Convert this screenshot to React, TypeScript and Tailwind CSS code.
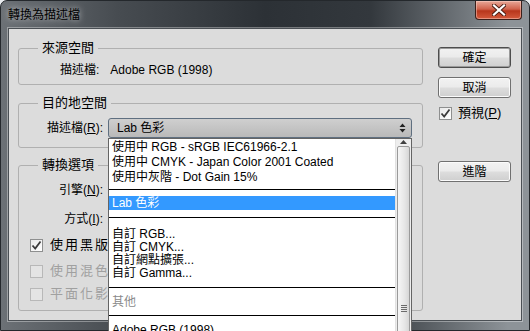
import React from 'react';

// Windows 7 styled "轉換為描述檔" dialog with the destination profile list opened

const font = "font-['Liberation_Sans','Noto_Sans_CJK_TC',sans-serif]";

const Check = ({ checked, disabled }: { checked?: boolean; disabled?: boolean }) => (
    <span
        className={`flex h-[13px] w-[13px] shrink-0 items-center justify-center border ${
            disabled ? 'border-[#b8b8b8] bg-[#e4e4e4]' : 'border-[#8e8f8f] bg-[linear-gradient(135deg,#e8e8e8,#ffffff)]'
        }`}
    >
        {checked && (
            <svg width="11" height="11" viewBox="0 0 11 11">
                <path d="M1.5 5.5 L4.2 8.5 L9.5 1.5" fill="none" stroke="#3a3a3a" strokeWidth="1.8" />
            </svg>
        )}
    </span>
);

const Button = ({ label, isDefault }: { label: string; isDefault?: boolean }) => (
    <button
        className={`flex h-[21px] w-[73px] items-center justify-center rounded-[3px] border text-[12px] leading-none text-black bg-[linear-gradient(#f2f2f2_0%,#ebebeb_48%,#dddddd_52%,#cfcfcf_100%)] ${
            isDefault ? 'border-[#4d4d4d] shadow-[inset_0_0_0_1px_#9a9a9a]' : 'border-[#707070] shadow-[inset_0_0_0_1px_#fbfbfb]'
        }`}
    >
        {label}
    </button>
);

const Separator = ({ h, top }: { h: string; top: string }) => (
    <div className={`${h} ${top}`}>
        <div className="h-px bg-black" />
    </div>
);

const Item = ({ text, h, muted }: { text: string; h: string; muted?: boolean }) => (
    <div className={`${h} flex items-center pl-[3px] whitespace-nowrap ${muted ? 'text-[#8a8a8a]' : 'text-black'}`}>
        {text}
    </div>
);

const App = () => {
    return (
        <div className={`h-[331px] w-[530px] overflow-hidden bg-[#e9ecef] ${font}`}>
            <div className="relative flex h-full w-full flex-col rounded-t-[7px] border border-[#24282c] bg-[linear-gradient(90deg,#6c7176_0%,#474c51_22%,#2c3136_50%,#33383d_70%,#8d9398_96%)]">
                {/* Title bar */}
                <div className="flex h-[27px] shrink-0 justify-between">
                    <span className="self-center pl-[7px] text-[12px] leading-none text-black [text-shadow:0_0_6px_rgba(255,255,255,0.7)]">
                        轉換為描述檔
                    </span>
                    <div className="mr-[7px] flex h-[19px] w-[47px] items-center justify-center rounded-b-[4px] border border-t-0 border-[#3b1f1a] bg-[linear-gradient(#e8a898_0%,#d0634c_45%,#b8361c_55%,#d45a3c_100%)] shadow-[inset_0_0_0_1px_rgba(255,220,210,0.45)]">
                        <svg width="14" height="12" viewBox="0 0 14 12">
                            <path d="M2 1.5 L12 10.5 M12 1.5 L2 10.5" stroke="#4a1c12" strokeWidth="4" strokeLinecap="square" />
                            <path d="M2 1.5 L12 10.5 M12 1.5 L2 10.5" stroke="#ffffff" strokeWidth="2.2" strokeLinecap="square" />
                        </svg>
                    </div>
                </div>

                {/* Client area */}
                <div className="mx-[7px] mb-[9px] flex flex-1 border border-[#4a4f54] bg-[#dcdcdc] text-[12px] text-black shadow-[0_0_0_1px_rgba(255,255,255,0.35)]">
                    <div className="w-[414px] shrink-0 pl-[9px] pt-[10px]">
                        {/* 來源空間 */}
                        <fieldset className="h-[46px] w-[405px] rounded-[3px] border border-[#b0b0b0]">
                            <legend className="ml-[19px] px-[4px] text-[13px] leading-[18px]">來源空間</legend>
                            <div className="mt-[5px] flex h-[16px] items-center pl-[41px]">
                                <span>描述檔:</span>
                                <span className="ml-[11px]">Adobe RGB (1998)</span>
                            </div>
                        </fieldset>

                        {/* 目的地空間 */}
                        <fieldset className="mt-[9px] h-[54px] w-[405px] rounded-[3px] border border-[#b0b0b0]">
                            <legend className="ml-[19px] px-[4px] text-[13px] leading-[18px]">目的地空間</legend>
                            <div className="mt-[6px] flex items-center pl-[23px]">
                                <span className="w-[61px] text-right">
                                    描述檔(<u>R</u>):
                                </span>
                                <div className="ml-[5px] flex h-[20px] w-[304px] items-center justify-between rounded-[3px] border border-[#5f6f80] bg-[linear-gradient(#cfcfcf,#b9b9b9)] pl-[8px] pr-[5px]">
                                    <span>Lab 色彩</span>
                                    <svg width="7" height="10" viewBox="0 0 7 10">
                                        <path d="M3.5 0.5 L6.5 4 L0.5 4 Z M3.5 9.5 L6.5 6 L0.5 6 Z" fill="#202020" />
                                    </svg>
                                </div>
                            </div>
                        </fieldset>

                        {/* 轉換選項 */}
                        <fieldset className="mt-[8px] h-[155px] w-[405px] rounded-[3px] border border-[#b0b0b0]">
                            <legend className="ml-[19px] px-[4px] text-[13px] leading-[18px]">轉換選項</legend>
                            <div className="mt-[6px] flex h-[20px] items-center pl-[23px]">
                                <span className="w-[61px] text-right">
                                    引擎(<u>N</u>):
                                </span>
                            </div>
                            <div className="mt-[9px] flex h-[20px] items-center pl-[23px]">
                                <span className="w-[61px] text-right">
                                    方式(<u>I</u>):
                                </span>
                            </div>
                            <div className="mt-[7px] flex h-[18px] items-center gap-[7px] pl-[11px]">
                                <Check checked />
                                <span className="text-[13px] tracking-[2px]">使用黑版補償(K)</span>
                            </div>
                            <div className="mt-[8px] flex h-[18px] items-center gap-[7px] pl-[11px] text-[#a0a0a0]">
                                <Check disabled />
                                <span className="text-[13px] tracking-[2px]">使用混色(D)</span>
                            </div>
                            <div className="mt-[5px] flex h-[18px] items-center gap-[7px] pl-[11px] text-[#a0a0a0]">
                                <Check disabled />
                                <span className="text-[13px] tracking-[2px]">平面化影像以保留外觀(F)</span>
                            </div>
                        </fieldset>
                    </div>

                    {/* Buttons */}
                    <div className="ml-[15px] flex w-[73px] flex-col pt-[18px]">
                        <Button label="確定" isDefault />
                        <div className="mt-[9px]">
                            <Button label="取消" />
                        </div>
                        <div className="ml-[1px] mt-[7px] flex h-[16px] items-center gap-[6px]">
                            <Check checked />
                            <span className="text-[13px]">
                                預視(<u>P</u>)
                            </span>
                        </div>
                        <div className="mt-[40px]">
                            <Button label="進階" />
                        </div>
                    </div>
                </div>

                {/* Opened profile list */}
                <div className="absolute left-[107px] top-[137px] flex h-[220px] w-[304px] border border-[#646464] bg-white text-[12px]">
                    <div className="flex-1">
                        <Item h="h-[15px]" text="使用中 RGB - sRGB IEC61966-2.1" />
                        <Item h="h-[15px]" text="使用中 CMYK - Japan Color 2001 Coated" />
                        <Item h="h-[15px]" text="使用中灰階 - Dot Gain 15%" />
                        <Separator h="h-[11px]" top="pt-[5px]" />
                        <div className="mt-[1px] flex h-[14px] items-center bg-[#3399ff] pl-[3px] text-white">Lab 色彩</div>
                        <Separator h="h-[17px]" top="pt-[7px]" />
                        <Item h="h-[13px]" text="自訂 RGB..." />
                        <Item h="h-[13px]" text="自訂 CMYK..." />
                        <Item h="h-[13px]" text="自訂網點擴張..." />
                        <Item h="h-[13px]" text="自訂 Gamma..." />
                        <Separator h="h-[16px]" top="pt-[8px]" />
                        <Item h="h-[13px]" text="其他" muted />
                        <Separator h="h-[14px]" top="pt-[7px]" />
                        <Item h="h-[15px]" text="Adobe RGB (1998)" />
                    </div>
                    {/* Scrollbar */}
                    <div className="flex w-[16px] flex-col border-l border-[#e2e2e2] bg-[#ededed]">
                        <div className="flex h-[17px] items-center justify-center">
                            <svg width="7" height="4" viewBox="0 0 7 4">
                                <path d="M3.5 0 L7 4 L0 4 Z" fill="#404040" />
                            </svg>
                        </div>
                        <div className="mx-[1px] mt-[2px] flex h-[330px] flex-col items-center rounded-[2px] border border-[#9a9a9a] bg-[linear-gradient(90deg,#f6f6f6,#e6e6e6_60%,#d6d6d6)] pt-[158px]">
                            <div className="flex flex-col gap-[1px]">
                                <div className="h-px w-[6px] bg-[#6a6a6a]" />
                                <div className="h-px w-[6px] bg-[#6a6a6a]" />
                                <div className="h-px w-[6px] bg-[#6a6a6a]" />
                                <div className="h-px w-[6px] bg-[#6a6a6a]" />
                            </div>
                        </div>
                    </div>
                </div>
            </div>
        </div>
    );
};

export default App;
